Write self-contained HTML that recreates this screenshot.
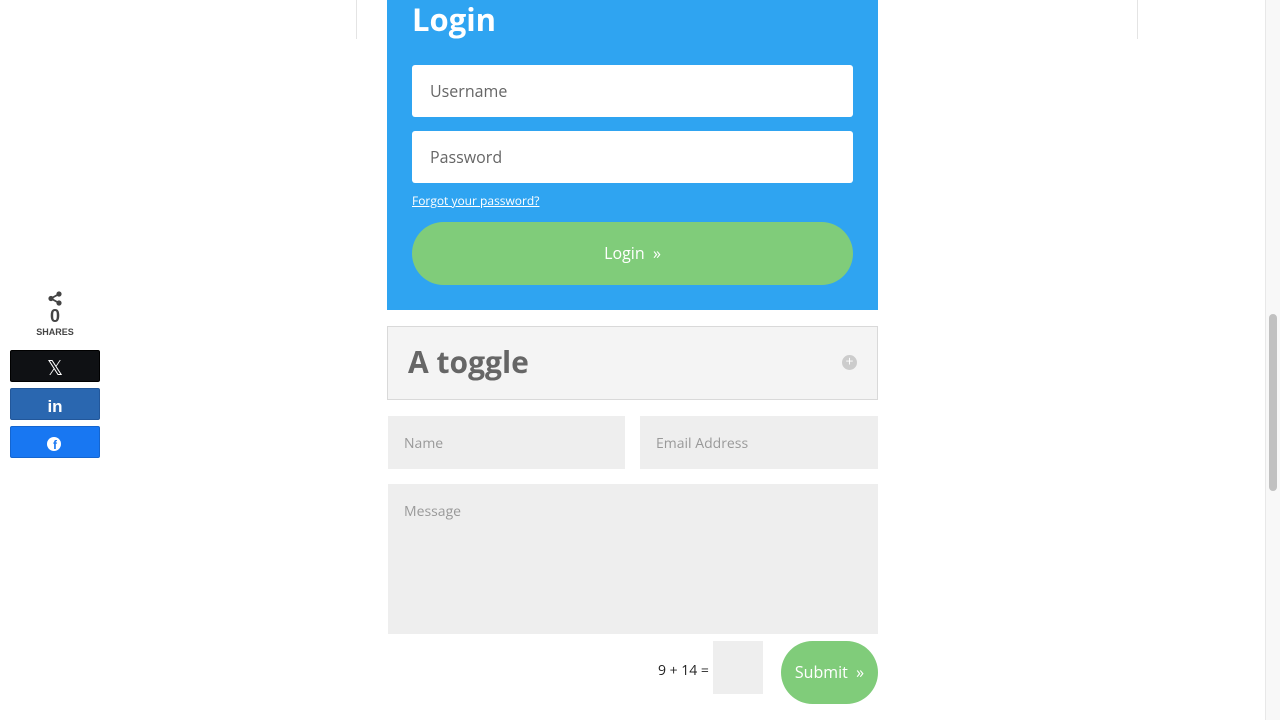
<!DOCTYPE html>
<html><head><style>
*{box-sizing:border-box;margin:0;padding:0}
body{width:1280px;height:720px;overflow:hidden;background:#fff;font-family:"Open Sans","Liberation Sans",sans-serif;position:relative}
.a{position:absolute}
</style></head><body>
<div class="a" style="left:356px;top:0;width:1px;height:39px;background:#e4e4e4"></div>
<div class="a" style="left:1137px;top:0;width:1px;height:39px;background:#e4e4e4"></div>
<div class="a" style="left:1265px;top:0;width:15px;height:720px;background:#f8f8f8;border-left:1px solid #e8e8e8"></div>
<div class="a" style="left:1269px;top:314px;width:8px;height:177px;background:#c1c1c1;border-radius:4px"></div>

<div class="a" style="left:387px;top:0;width:491px;height:310px;background:#2fa4f1"></div>
<div class="a" style="left:412px;top:0;color:#fff;font-weight:bold;font-size:31px;line-height:40px">Login</div>
<div class="a" style="left:412px;top:65px;width:441px;height:52px;background:#fff;border-radius:3px;color:#666;font-size:16px;line-height:52px;padding-left:18px">Username</div>
<div class="a" style="left:412px;top:131px;width:441px;height:52px;background:#fff;border-radius:3px;color:#666;font-size:16px;line-height:52px;padding-left:18px">Password</div>
<div class="a" style="left:412px;top:192px;color:#fff;font-size:12px;text-decoration:underline;line-height:17px">Forgot your password?</div>
<div class="a" style="left:412px;top:222px;width:441px;height:63px;background:#80cc7a;border-radius:32px;color:#fff;font-size:16px;line-height:63px;text-align:center">Login &nbsp;»</div>

<div class="a" style="left:387px;top:326px;width:491px;height:74px;background:#f4f4f4;border:1px solid #d9d9d9"></div>
<div class="a" style="left:408px;top:343px;color:#666;font-weight:bold;font-size:30px;line-height:38px">A toggle</div>
<div class="a" style="left:842px;top:355px;width:15px;height:15px;border-radius:50%;background:#ccc;color:#fff;font-size:14px;line-height:14px;text-align:center">+</div>

<div class="a" style="left:388px;top:416px;width:237px;height:53px;background:#eee;color:#999;font-size:14px;line-height:55px;padding-left:16px">Name</div>
<div class="a" style="left:640px;top:416px;width:238px;height:53px;background:#eee;color:#999;font-size:14px;line-height:55px;padding-left:16px">Email Address</div>
<div class="a" style="left:388px;top:484px;width:490px;height:150px;background:#eee;color:#999;font-size:14px;padding:18px 16px">Message</div>
<div class="a" style="left:658px;top:662px;color:#222;font-size:14px;line-height:18px">9 + 14 =</div>
<div class="a" style="left:713px;top:641px;width:50px;height:53px;background:#eee"></div>
<div class="a" style="left:781px;top:641px;width:97px;height:63px;background:#80cc7a;border-radius:32px;color:#fff;font-size:16px;line-height:63px;text-align:center">Submit &nbsp;»</div>

<svg class="a" style="left:47px;top:291px" width="16" height="15" viewBox="0 0 16 15"><circle cx="12" cy="3" r="2.6" fill="#444"/><circle cx="4" cy="7.5" r="2.6" fill="#444"/><circle cx="12" cy="12" r="2.6" fill="#444"/><path d="M12 3L4 7.5L12 12" stroke="#444" stroke-width="1.8" fill="none"/></svg>
<div class="a" style="left:0;width:110px;top:305px;text-align:center;font-family:'Liberation Sans',sans-serif;font-weight:bold;color:#444;font-size:18px;line-height:22px">0</div>
<div class="a" style="left:0;width:110px;top:327px;text-align:center;font-family:'Liberation Sans',sans-serif;font-weight:bold;color:#444;font-size:9px">SHARES</div>
<div class="a" style="left:10px;top:350px;width:90px;height:32px;background:#0f1114;border:1px solid #000;border-radius:2px;color:#fff;text-align:center;font-size:20px;line-height:34px;font-family:'DejaVu Sans',sans-serif">𝕏</div>
<div class="a" style="left:10px;top:388px;width:90px;height:32px;background:#2a67b0;border:1px solid #22579a;border-radius:2px;color:#fff;text-align:center;font-weight:bold;font-size:17px;line-height:36px;font-family:'Liberation Sans',sans-serif">in</div>
<div class="a" style="left:10px;top:426px;width:90px;height:32px;background:#1877f2;border:1px solid #1465d0;border-radius:2px"></div>
<div class="a" style="left:47px;top:437px;width:14px;height:14px;border-radius:50%;background:#fff;color:#1877f2;font-weight:bold;font-family:'Liberation Sans',sans-serif;font-size:12px;line-height:16px;text-align:center;padding-left:2px">f</div>
</body></html>
